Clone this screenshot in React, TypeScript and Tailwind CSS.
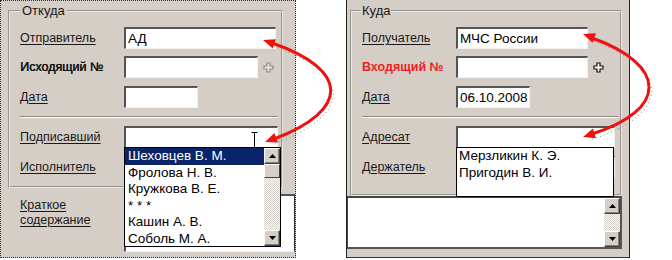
import React from 'react';

const panelBg = 'bg-[#d5cec6]';

function Input({ className, value, children }: { className: string; value?: string; children?: React.ReactNode }) {
  return (
    <div
      className={`relative h-[22px] bg-white border-t-2 border-l-2 border-t-[#555] border-l-[#555] border-r border-b border-r-[#f2f2f2] border-b-[#f2f2f2] pl-[2px] text-[13.5px] leading-[19px] text-black ${className}`}
    >
      {value}
      {children}
    </div>
  );
}

function Label({ text, className, plain }: { text: string; className: string; plain?: boolean }) {
  return (
    <div className={`shrink-0 text-[12.5px] ${className}`}>
      <span className={plain ? '' : 'underline underline-offset-2 decoration-1'}>{text}</span>
    </div>
  );
}

function Plus({ dark }: { dark?: boolean }) {
  return (
    <svg width="11" height="11" viewBox="0 0 11 11" className="ml-[5px]">
      <path
        d="M4 1h3v3h3v3H7v3H4V7H1V4h3z"
        fill={dark ? '#fff' : '#e8e4df'}
        stroke={dark ? '#111' : '#8e8a86'}
        strokeWidth="1.2"
      />
    </svg>
  );
}

function Arrow({ up }: { up?: boolean }) {
  return (
    <div className="h-[16px] w-[16px] bg-[#d4d0c8] border border-t-white border-l-white border-r-[#404040] border-b-[#404040] shadow-[inset_-1px_-1px_0_#808080] flex items-center justify-center">
      <svg width="7" height="4" viewBox="0 0 7 4">
        <path d={up ? 'M3.5 0L7 4H0z' : 'M0 0h7L3.5 4z'} fill="#000" />
      </svg>
    </div>
  );
}

function ScrollBar({ thumb }: { thumb?: boolean }) {
  return (
    <div className="w-[16px] shrink-0 flex flex-col">
      <Arrow up />
      {thumb && (
        <div className="h-[14px] bg-[#d4d0c8] border border-t-white border-l-white border-r-[#404040] border-b-[#404040]" />
      )}
      <div className="flex-1 bg-[repeating-conic-gradient(#ffffff_0_25%,#d4d0c8_0_50%)] bg-[length:2px_2px]" />
      <Arrow />
    </div>
  );
}

function Separator({ className }: { className: string }) {
  return <div className={`h-[2px] border-t border-t-[#8c867f] border-b border-b-white ${className}`} />;
}

function LeftPanel() {
  const items = ['Фролова Н. В.', 'Кружкова В. Е.', '* * *', 'Кашин А. В.', 'Соболь М. А.'];
  return (
    <div className={`relative w-[296px] h-[258px] shrink-0 ${panelBg} border border-dotted border-[#333] pt-[9px]`}>
      <div className="ml-[7px] w-[275px] border-2 [border-style:groove] border-[#ece7e0] pl-[10px] pb-[8px]">
        <span className={`block w-fit -mt-[9px] px-[2px] ${panelBg} leading-[15px] text-[13px]`}>Откуда</span>
        <div className="flex items-center h-[22px] mt-[9px]">
          <Label text="Отправитель" className="w-[104px]" />
          <Input className="w-[152px]" value="АД" />
        </div>
        <div className="flex items-center h-[22px] mt-[7px]">
          <Label text="Исходящий №" className="w-[104px] text-[#111] [text-shadow:0.4px_0_0_#111]" plain />
          <Input className="w-[134px]" />
          <Plus />
        </div>
        <div className="flex items-center h-[22px] mt-[8px]">
          <Label text="Дата" className="w-[104px]" />
          <Input className="w-[74px]" />
        </div>
        <Separator className="mt-[8px] mr-[3px]" />
        <div className="flex items-center h-[22px] mt-[8px]">
          <Label text="Подписавший" className="w-[104px]" />
          <Input className="w-[154px]">
            <svg width="7" height="16" viewBox="0 0 7 16" className="absolute left-[125px] top-[4px]">
              <path d="M0.5 0.5h6M3.5 0.5v15M0.5 15.5h6" stroke="#000" strokeWidth="1" fill="none" />
            </svg>
          </Input>
        </div>
        <div className="flex items-center h-[22px] mt-[8px]">
          <Label text="Исполнитель" className="w-[104px]" />
          <Input className="w-[154px]" />
        </div>
      </div>
      <div className="flex mt-[6px]">
        <div className="w-[123px] pl-[19px] pt-[4px] text-[12.5px] leading-[15px]">
          <span className="underline underline-offset-2 decoration-1">Краткое</span>
          <br />
          <span className="underline underline-offset-2 decoration-1">содержание</span>
        </div>
        <div className="flex-1 h-[58px] bg-white border-t-2 border-l-2 border-t-[#555] border-l-[#555] border-r border-b border-r-[#333] border-b-[#f2f2f2]" />
      </div>
      <div className="absolute left-[123px] top-[146px] w-[157px] h-[100px] bg-white border border-black flex overflow-hidden">
        <div className="flex-1 text-[13.5px] leading-[16.5px]">
          <div className="bg-[#0a246a] text-white pl-[3px]">Шеховцев В. М.</div>
          {items.map((t) => (
            <div key={t} className="pl-[3px] text-black">
              {t}
            </div>
          ))}
        </div>
        <ScrollBar thumb />
      </div>
    </div>
  );
}

function RightPanel() {
  return (
    <div className={`relative w-[284px] h-[258px] shrink-0 ${panelBg} border-x border-b border-x-[#222] border-b-[#333] border-b-dashed pt-[10px]`}>
      <div className="ml-[3px] w-[272px] border-2 [border-style:groove] border-[#ece7e0] pl-[10px] pb-[16px]">
        <span className={`block w-fit -mt-[9px] -ml-[1px] px-[1px] ${panelBg} leading-[15px] text-[13px]`}>Куда</span>
        <div className="flex items-center h-[22px] mt-[9px]">
          <Label text="Получатель" className="w-[94px]" />
          <Input className="w-[132px]" value="МЧС России" />
        </div>
        <div className="flex items-center h-[22px] mt-[7px]">
          <Label text="Входящий №" className="w-[94px] font-bold text-[#ee1f1f]" plain />
          <Input className="w-[132px]" />
          <Plus dark />
        </div>
        <div className="flex items-center h-[22px] mt-[8px]">
          <Label text="Дата" className="w-[94px]" />
          <Input className="w-[74px]" value="06.10.2008" />
        </div>
        <Separator className="mt-[8px] mr-[2px]" />
        <div className="flex items-center h-[22px] mt-[8px]">
          <Label text="Адресат" className="w-[94px]" />
          <Input className="w-[159px]" />
        </div>
        <div className="flex items-center h-[22px] mt-[8px]">
          <Label text="Держатель" className="w-[94px]" />
          <Input className="w-[159px]" />
        </div>
      </div>
      <div className="w-[275px] h-[53px] bg-white border-t-2 border-l border-t-[#444] border-l-[#444] border-r-2 border-b-2 border-r-[#555] border-b-[#555] flex justify-end">
        <ScrollBar />
      </div>
      <div className="absolute left-[109px] top-[147px] w-[158px] h-[50px] bg-white border border-black pl-[2px] text-[13.5px] leading-[16.5px] text-black">
        <div>Мерзликин К. Э.</div>
        <div>Пригодин В. И.</div>
      </div>
    </div>
  );
}

function Arrows() {
  return (
    <svg width="672" height="260" viewBox="0 0 672 260" className="absolute inset-0 pointer-events-none">
      <path d="M270 45 C354 74, 354 114, 272 145" stroke="#8a8a8a" strokeWidth="1" strokeDasharray="1 3" fill="none" />
      <path d="M590 40 C672 69, 672 114, 590 140" stroke="#8a8a8a" strokeWidth="1" strokeDasharray="1 3" fill="none" />
      <path d="M272 43 C350 70, 350 110, 274 139" stroke="#ee1111" strokeWidth="3" fill="none" />
      <polygon points="263,40 272.7,48.6 275.9,39.2" fill="#ee1111" />
      <polygon points="265,142 278,142.5 274.4,133.1" fill="#ee1111" />
      <path d="M592 38 C668 65, 668 110, 592 134" stroke="#ee1111" strokeWidth="3" fill="none" />
      <polygon points="583,34 592.6,42.7 596,33.3" fill="#ee1111" />
      <polygon points="583,137 595.9,138.2 592.9,128.6" fill="#ee1111" />
    </svg>
  );
}

export default function App() {
  return (
    <div className="relative w-[672px] h-[260px] bg-white flex font-['Liberation_Sans',Arial,sans-serif] text-[#1a1a1a]">
      <LeftPanel />
      <div className="ml-[50px]">
        <RightPanel />
      </div>
      <Arrows />
    </div>
  );
}
